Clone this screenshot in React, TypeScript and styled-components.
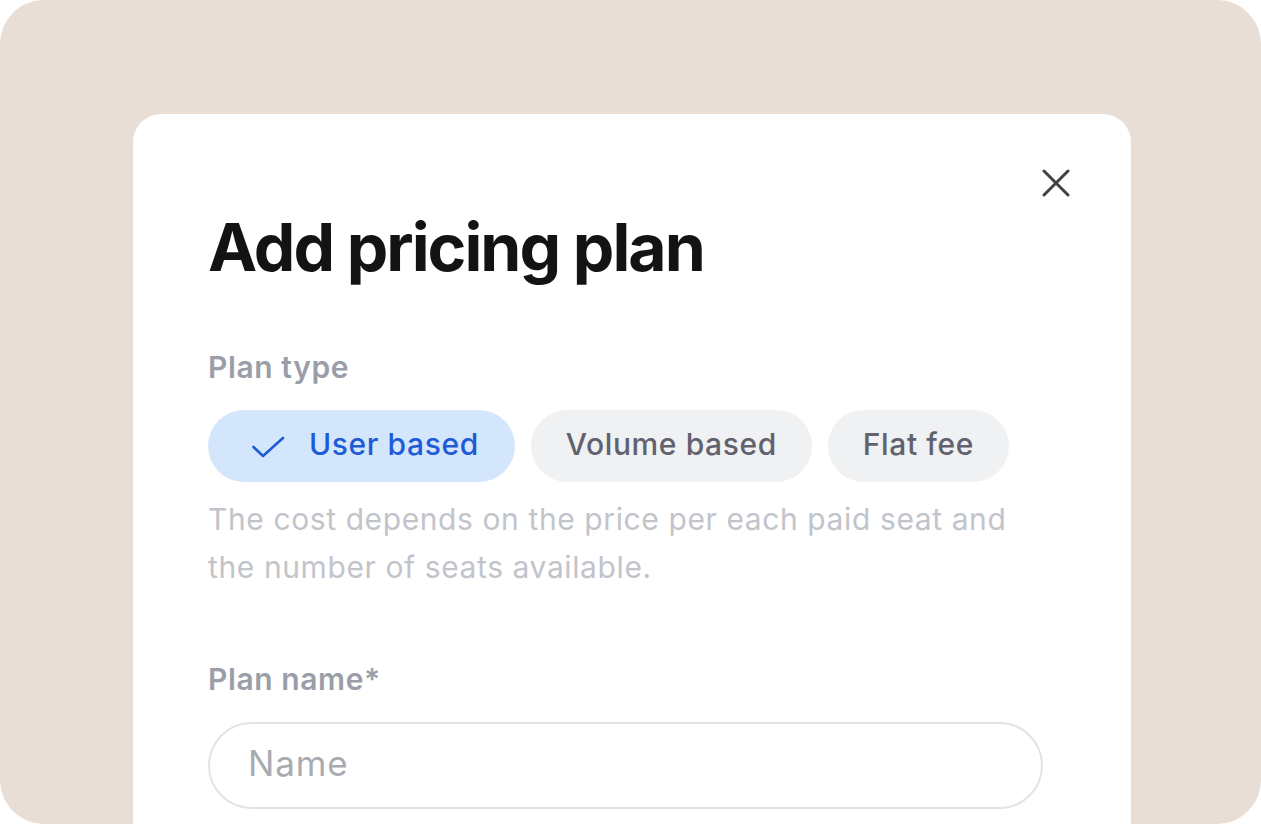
import React from "react";
import styled, { createGlobalStyle } from "styled-components";

const GlobalStyle = createGlobalStyle`
  html, body {
    margin: 0;
    padding: 0;
    background: #ffffff;
  }
  body {
    font-family: Inter, "Noto Sans", "Liberation Sans", sans-serif;
    -webkit-font-smoothing: antialiased;
  }
  * { box-sizing: border-box; }
`;

const Frame = styled.div`
  width: 1261px;
  height: 824px;
  background: #e8ded6;
  border-radius: 44px;
  overflow: hidden;
  display: flex;
  padding: 114px 0 0 133px;
`;

const Card = styled.section`
  position: relative;
  width: 998px;
  height: 100%;
  background: #ffffff;
  border-radius: 28px 28px 0 0;
  padding: 100px 88px 0 75px;
  display: flex;
  flex-direction: column;
`;

const CloseButton = styled.button`
  position: absolute;
  top: 55px;
  right: 61px;
  width: 28px;
  height: 28px;
  padding: 0;
  border: none;
  background: transparent;
  display: flex;
  align-items: center;
  justify-content: center;
  cursor: pointer;
`;

const Title = styled.h1`
  margin: 0;
  font-size: 66px;
  line-height: 66px;
  font-weight: 700;
  letter-spacing: -0.03em;
  color: #131313;
`;

const Field = styled.div<{ $top: number }>`
  display: flex;
  flex-direction: column;
  margin-top: ${(p) => p.$top}px;
`;

const Label = styled.label`
  font-size: 30px;
  line-height: 30px;
  font-weight: 600;
  letter-spacing: 0.02em;
  color: #9a9ea9;
  margin-bottom: 28px;
`;

const ChipRow = styled.div`
  display: flex;
  gap: 16px;
`;

const Chip = styled.button<{ $active?: boolean }>`
  height: 72px;
  padding: 0 ${(p) => (p.$active ? 36 : 35)}px 4px;
  border: none;
  border-radius: 36px;
  display: flex;
  align-items: center;
  gap: 24px;
  font-family: inherit;
  font-size: 30px;
  font-weight: 500;
  letter-spacing: 0.02em;
  background: ${(p) => (p.$active ? "#d3e6fc" : "#f0f1f3")};
  color: ${(p) => (p.$active ? "#1f5bd6" : "#61626e")};
  cursor: pointer;
`;

const CheckIcon = styled.svg`
  margin-left: 8px;
  margin-top: 6px;
  flex-shrink: 0;
`;

const Description = styled.p`
  margin: 13px 0 0;
  font-size: 30px;
  line-height: 48px;
  font-weight: 400;
  letter-spacing: 0.02em;
  color: #c2c4cb;
  max-width: 830px;
`;

const Input = styled.input`
  width: 100%;
  height: 87px;
  border: 2px solid #e3e3e3;
  border-radius: 44px;
  padding: 0 38px 5px;
  font-family: inherit;
  font-size: 35px;
  letter-spacing: 0.025em;
  color: #131313;
  background: #ffffff;
  outline: none;
  &::placeholder {
    color: #a9abb2;
  }
`;

export default function App() {
  return (
    <>
      <GlobalStyle />
      <Frame>
        <Card>
          <CloseButton aria-label="Close">
            <svg width="28" height="28" viewBox="0 0 28 28" fill="none">
              <path
                d="M2 2L26 26M26 2L2 26"
                stroke="#404040"
                strokeWidth="3"
                strokeLinecap="round"
              />
            </svg>
          </CloseButton>
          <Title>Add pricing plan</Title>
          <Field $top={72}>
            <Label>Plan type</Label>
            <ChipRow>
              <Chip $active>
                <CheckIcon width="33" height="22" viewBox="0 0 33 22" fill="none">
                  <path
                    d="M1.5 11L11 20L31 2"
                    stroke="#1f5bd6"
                    strokeWidth="2.6"
                    strokeLinecap="round"
                    strokeLinejoin="round"
                  />
                </CheckIcon>
                User based
              </Chip>
              <Chip>Volume based</Chip>
              <Chip>Flat fee</Chip>
            </ChipRow>
            <Description>
              The cost depends on the price per each paid seat and the number of seats available.
            </Description>
          </Field>
          <Field $top={73}>
            <Label>Plan name*</Label>
            <Input placeholder="Name" />
          </Field>
        </Card>
      </Frame>
    </>
  );
}
